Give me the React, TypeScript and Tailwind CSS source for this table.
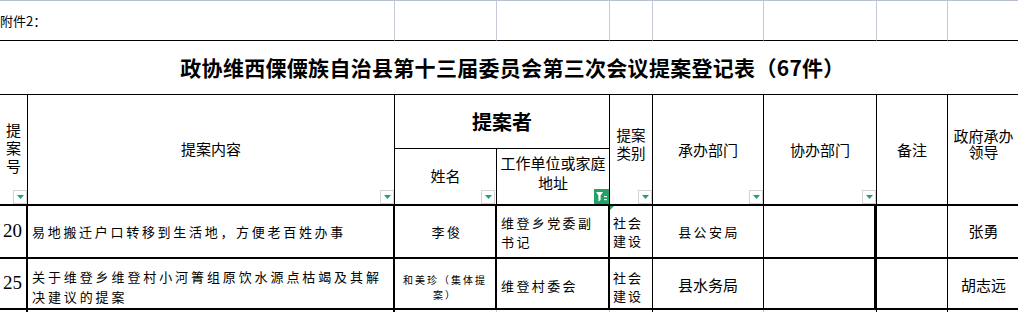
import React from "react";

function FilterBtn({ className = "" }: { className?: string }) {
  return (
    <span
      className={
        "absolute bottom-0 flex h-[14px] w-[14px] items-center justify-center border border-[#d4d4d4] bg-white " +
        className
      }
    >
      <svg width="7" height="4" viewBox="0 0 7 4">
        <path d="M0 0h7L3.5 4z" fill="#1fa463" />
      </svg>
    </span>
  );
}

function FilterActive() {
  return (
    <span className="absolute bottom-0 right-0 flex h-[15px] w-[15px] items-center justify-center bg-[#21a366]">
      <svg width="11" height="10" viewBox="0 0 11 10" fill="white">
        <path d="M0 0h7L4.6 3.4V8L2.4 9.4V3.4z" />
        <rect x="8" y="4" width="3" height="1.2" />
        <rect x="8" y="7" width="3" height="1.2" />
      </svg>
    </span>
  );
}

export default function App() {
  const cjk = "font-['Noto_Sans_CJK_SC','Noto_Sans',sans-serif]";
  const gray = "border-t border-r border-b border-t-[#b7bfcf] border-r-[#c5cad6] border-b-black";

  return (
    <div className={"h-[312px] w-[1018px] overflow-hidden bg-white text-black " + cjk}>
      <div className="grid grid-cols-[28px_367px_102px_113px_43px_111px_113px_71px_71px] grid-rows-[41px_54px_54px_57px_53px_51px_1fr] h-full">
        {/* row 1: attachment label, plain grid cells */}
        <div className={"col-span-2 flex items-center whitespace-nowrap text-[13px] leading-none " + gray}>
          附件2：
        </div>
        <div className={gray} />
        <div className={gray + " border-t-[#21b573]"} />
        <div className={gray} />
        <div className={gray} />
        <div className={gray} />
        <div className={gray} />
        <div className={gray} />

        {/* row 2: title */}
        <div className="col-span-9 flex items-center justify-center border-b border-black pl-[6px] text-[21px] font-bold tracking-[0.3px]">
          政协维西傈僳族自治县第十三届委员会第三次会议提案登记表（67件）
        </div>

        {/* header */}
        <div className="relative row-span-2 flex items-center justify-center border-r border-b-2 border-black pb-[4px]">
          <span className="w-[15px] text-center text-[15px] leading-[18px]">提案号</span>
          <FilterBtn className="right-0" />
        </div>
        <div className="relative row-span-2 flex items-center justify-center border-r border-b-2 border-black text-[15px]">
          提案内容
          <FilterBtn className="right-0" />
        </div>
        <div className="col-span-2 flex items-center justify-center border-r border-b border-black text-[20px] font-bold">
          提案者
        </div>
        <div className="relative row-span-2 flex items-center justify-center border-r border-b-2 border-black pb-[12px]">
          <span className="w-[30px] text-center text-[14.5px] leading-[18px]">提案类别</span>
          <FilterBtn className="right-0" />
        </div>
        <div className="relative row-span-2 flex items-center justify-center border-r border-b-2 border-black pt-[2px] text-[15px]">
          承办部门
          <FilterBtn className="right-0" />
        </div>
        <div className="relative row-span-2 flex items-center justify-center border-r border-b-2 border-black pt-[2px] text-[15px]">
          协办部门
          <FilterBtn className="right-0" />
        </div>
        <div className="row-span-2 flex items-center justify-center border-r border-b-2 border-black pt-[2px] text-[15px]">
          备注
        </div>
        <div className="row-span-2 flex items-center justify-center border-b-2 border-black pb-[12px]">
          <span className="w-[61px] text-center text-[15px] leading-[16px]">政府承办领导</span>
        </div>
        <div className="relative flex items-center justify-center border-r border-b-2 border-black text-[15px]">
          姓名
          <FilterBtn className="right-[1px]" />
        </div>
        <div className="relative flex items-center justify-center border-r border-b-2 border-black pb-[8px]">
          <span className="w-[108px] text-center text-[15px] leading-[20px]">工作单位或家庭地址</span>
          <FilterActive />
        </div>

        {/* data row 20 */}
        <div className="flex items-center border-r-2 border-b-2 border-black pl-[3px] font-['Liberation_Serif',serif] text-[19px]">
          20
        </div>
        <div className="flex items-center border-r-2 border-b-2 border-black pl-[4px] text-[13px] tracking-[2.7px]">
          易地搬迁户口转移到生活地，方便老百姓办事
        </div>
        <div className="flex items-center justify-center border-r-2 border-b-2 border-black pl-[4px] text-[13px] tracking-[2.5px]">
          李俊
        </div>
        <div className="flex items-center border-r-2 border-b-2 border-black pl-[4px]">
          <span className="w-[95px] text-[13px] leading-[19px] tracking-[2.4px]">维登乡党委副书记</span>
        </div>
        <div className="relative flex items-center border-r border-b-2 border-black pl-[3px]">
          <span className="absolute left-0 top-0 h-0 w-0 border-t-[4px] border-r-[4px] border-t-[#1fa463] border-r-transparent" />
          <span className="w-[31px] text-[13px] leading-[18px] tracking-[2px]">社会建设</span>
        </div>
        <div className="flex items-center justify-center border-r border-b-2 border-black pl-[2px] text-[13px] tracking-[2.4px]">
          县公安局
        </div>
        <div className="border-r-[3px] border-b-2 border-black" />
        <div className="border-r border-b-2 border-black" />
        <div className="flex items-center justify-center border-b-2 border-black text-[15px]">张勇</div>

        {/* data row 25 */}
        <div className="flex items-center border-r-2 border-b-2 border-black pl-[3px] font-['Liberation_Serif',serif] text-[19px]">
          25
        </div>
        <div className="flex items-center border-r-2 border-b-2 border-black pt-[6px] pl-[4px]">
          <span className="w-[352px] text-[13px] leading-[20px] tracking-[2.9px]">
            关于维登乡维登村小河箐组原饮水源点枯竭及其解决建议的提案
          </span>
        </div>
        <div className="flex items-center justify-center border-r-2 border-b-2 border-black pt-[6px]">
          <span className="w-[86px] text-center text-[10px] leading-[15px] tracking-[2px]">和美珍（集体提案）</span>
        </div>
        <div className="flex items-center border-r-2 border-b-2 border-black pt-[4px] pl-[4px] text-[13px] tracking-[2.4px]">
          维登村委会
        </div>
        <div className="flex items-center border-r border-b-2 border-black pt-[6px] pl-[3px]">
          <span className="w-[31px] text-[13px] leading-[18px] tracking-[2px]">社会建设</span>
        </div>
        <div className="flex items-center justify-center border-r border-b-2 border-black pt-[4px] text-[15px]">
          县水务局
        </div>
        <div className="border-r-[3px] border-b-2 border-black" />
        <div className="border-r border-b-2 border-black" />
        <div className="flex items-center justify-center border-b-2 border-black pt-[4px] text-[15px]">胡志远</div>

        {/* rest of sheet */}
        <div className="border-r-2 border-black" />
        <div className="border-r-2 border-black" />
        <div className="border-r border-[#c5cad6]" />
        <div className="border-r border-[#c5cad6]" />
        <div className="border-r border-black" />
        <div className="border-r border-[#c5cad6]" />
        <div className="border-r border-black" />
        <div className="border-r border-black" />
        <div />
      </div>
    </div>
  );
}
